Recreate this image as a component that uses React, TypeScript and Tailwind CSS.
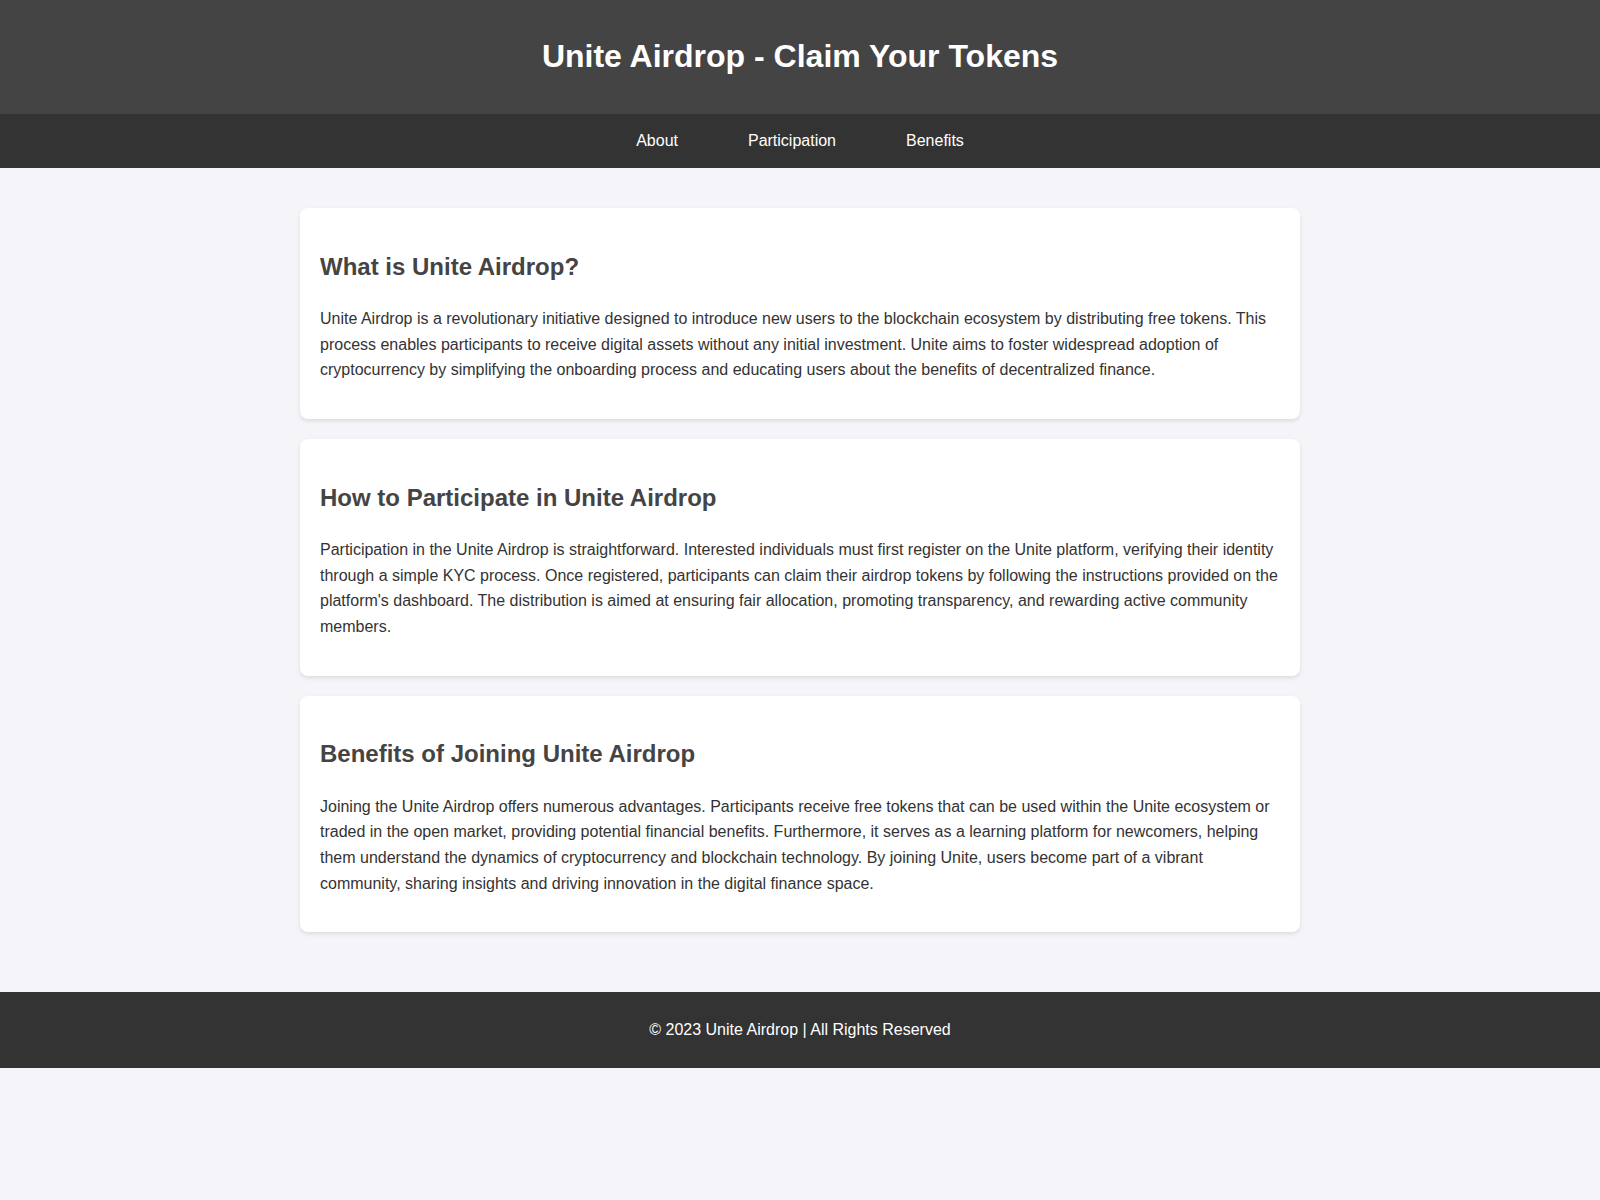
import React from "react";

const sections = [
  {
    title: "What is Unite Airdrop?",
    body: "Unite Airdrop is a revolutionary initiative designed to introduce new users to the blockchain ecosystem by distributing free tokens. This process enables participants to receive digital assets without any initial investment. Unite aims to foster widespread adoption of cryptocurrency by simplifying the onboarding process and educating users about the benefits of decentralized finance.",
  },
  {
    title: "How to Participate in Unite Airdrop",
    body: "Participation in the Unite Airdrop is straightforward. Interested individuals must first register on the Unite platform, verifying their identity through a simple KYC process. Once registered, participants can claim their airdrop tokens by following the instructions provided on the platform's dashboard. The distribution is aimed at ensuring fair allocation, promoting transparency, and rewarding active community members.",
  },
  {
    title: "Benefits of Joining Unite Airdrop",
    body: "Joining the Unite Airdrop offers numerous advantages. Participants receive free tokens that can be used within the Unite ecosystem or traded in the open market, providing potential financial benefits. Furthermore, it serves as a learning platform for newcomers, helping them understand the dynamics of cryptocurrency and blockchain technology. By joining Unite, users become part of a vibrant community, sharing insights and driving innovation in the digital finance space.",
  },
];

export default function App() {
  return (
    <div
      className="min-h-[1200px] bg-[#f4f4f9] text-[#333] text-[16px] leading-[1.6]"
      style={{ fontFamily: '"Liberation Sans", Arial, sans-serif' }}
    >
      <header className="h-[114px] bg-[#444] text-white flex items-center justify-center">
        <h1 className="text-[32px] font-bold leading-[1.6]">Unite Airdrop - Claim Your Tokens</h1>
      </header>
      <nav className="h-[54px] bg-[#333] flex items-center justify-center gap-[70px]">
        <a className="text-white">About</a>
        <a className="text-white">Participation</a>
        <a className="text-white">Benefits</a>
      </nav>
      <main className="max-w-[1040px] mx-auto my-[20px] p-[20px]">
        {sections.map((s) => (
          <section
            key={s.title}
            className="bg-white rounded-[8px] p-[20px] mb-[20px] shadow-[0_2px_4px_rgba(0,0,0,0.1)]"
          >
            <h2 className="text-[24px] font-bold text-[#444] leading-[1.6] my-[19.92px]">{s.title}</h2>
            <p className="my-[16px]">{s.body}</p>
          </section>
        ))}
      </main>
      <footer className="h-[76px] bg-[#333] text-white flex items-center justify-center">
        <p>© 2023 Unite Airdrop | All Rights Reserved</p>
      </footer>
    </div>
  );
}
